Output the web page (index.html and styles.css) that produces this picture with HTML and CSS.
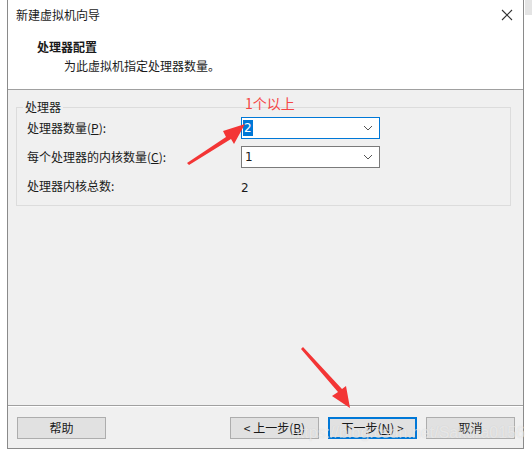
FILE: index.html
```html
<!DOCTYPE html>
<html>
<head>
<meta charset="utf-8">
<link rel="stylesheet" href="styles.css">
</head>
<body>
<div class="corner"></div>
<div class="window">
  <div class="header">
    <div class="titlebar">
      <span class="title">新建虚拟机向导</span>
      <svg class="close" width="12" height="12" viewBox="0 0 12 12"><path d="M1 1L11 11M11 1L1 11" stroke="#333" stroke-width="1.1" fill="none"/></svg>
    </div>
    <div class="heading">处理器配置</div>
    <div class="subheading">为此虚拟机指定处理器数量。</div>
  </div>
  <div class="body">
    <div class="group">
      <div class="legend">处理器</div>
      <div class="grid">
        <div class="label">处理器数量(<u>P</u>):</div>
        <div class="combo focused"><span class="sel">2</span><svg class="chev" width="10" height="6" viewBox="0 0 10 6"><path d="M1 1L5 5L9 1" stroke="#555" fill="none"/></svg></div>
        <div class="label">每个处理器的内核数量(<u>C</u>):</div>
        <div class="combo"><span class="val">1</span><svg class="chev" width="10" height="6" viewBox="0 0 10 6"><path d="M1 1L5 5L9 1" stroke="#555" fill="none"/></svg></div>
        <div class="label">处理器内核总数:</div>
        <div class="plain">2</div>
      </div>
    </div>
  </div>
  <div class="footer">
    <div class="btn">帮助</div>
    <div class="spacer"></div>
    <div class="btn">&lt; 上一步(<u>B</u>)</div>
    <div class="btn default">下一步(<u>N</u>) &gt;</div>
    <div class="btn">取消</div>
  </div>
</div>
<div class="note">1个以上</div>
<svg class="arrows" width="532" height="456" viewBox="0 0 532 456">
  <polygon points="187,163 226,137 223,131 245,124 234,144 231,139 189,165" fill="#f33535"/>
  <polygon points="301,349 338,392 332,396 350,408 346,386 342,389 303,347" fill="#f33535"/>
</svg>
<div class="watermark">https://blog.csdn.net/Sakura0156</div>
</body>
</html>
```
FILE: styles.css
```css
html, body {
  margin: 0;
  padding: 0;
  background: #ffffff;
  width: 532px;
  height: 456px;
  overflow: hidden;
  font-family: "Microsoft YaHei", "Noto Sans CJK SC", "DejaVu Sans", sans-serif;
  font-size: 12px;
  color: #1a1a1a;
}
.corner {
  position: absolute;
  left: 525px;
  top: 0;
  width: 7px;
  height: 15px;
  background: #e4e4e4;
}
.window {
  margin-left: 7px;
  width: 515px;
  height: 448px;
  border: 1px solid #8a8a8a;
  border-top: none;
  display: flex;
  flex-direction: column;
  background: #f0f0f0;
}
.header {
  background: #ffffff;
  height: 90px;
  border-bottom: 1px solid #a0a0a0;
  box-sizing: border-box;
  flex: none;
}
.titlebar {
  height: 30px;
  display: flex;
  align-items: center;
  justify-content: space-between;
  padding: 0 10px 0 8px;
  line-height: 16px;
}
.close { display: block; margin-top: 0; }
.heading {
  font-weight: bold;
  margin-left: 29px;
  margin-top: 8px;
  line-height: 18px;
}
.subheading {
  margin-left: 56px;
  margin-top: 1px;
  line-height: 18px;
}
.body {
  flex: 1;
  padding: 17px 0 0 8px;
  border-bottom: 1px solid #a0a0a0;
}
.group {
  position: relative;
  width: 495px;
  height: 99px;
  border: 1px solid #dcdcdc;
  box-sizing: border-box;
}
.legend {
  position: absolute;
  top: -9px;
  left: 6px;
  padding: 0 2px;
  background: #f0f0f0;
  line-height: 16px;
}
.grid {
  display: grid;
  grid-template-columns: 214px 139px;
  grid-template-rows: 22px 22px 22px;
  row-gap: 7px;
  padding: 9px 0 0 10px;
  align-items: center;
}
.label { line-height: 16px; }
.label u, .btn u { text-decoration: underline; }
.combo {
  height: 22px;
  box-sizing: border-box;
  border: 1px solid #7a7a7a;
  background: #fff;
  display: flex;
  align-items: center;
  justify-content: space-between;
  padding: 0 6px 0 1px;
}
.combo.focused { border-color: #0078d7; }
.sel {
  background: #0078d7;
  color: #fff;
  padding: 0 1px;
  line-height: 16px;
  font-family: "DejaVu Sans", sans-serif;
}
.val {
  padding-left: 2px;
  line-height: 16px;
  font-family: "DejaVu Sans", sans-serif;
}
.plain {
  line-height: 16px;
  font-family: "DejaVu Sans", sans-serif;
  margin-top: 4px;
}
.footer {
  height: 42px;
  flex: none;
  display: flex;
  align-items: flex-start;
  padding: 10px 0 0 9px;
  box-sizing: border-box;
  border-top: 1px solid #ffffff;
  gap: 9px;
}
.spacer { width: 106px; flex: none; }
.btn {
  width: 89px;
  flex: none;
  height: 22px;
  box-sizing: border-box;
  border: 1px solid #adadad;
  background: #e1e1e1;
  display: flex;
  align-items: center;
  justify-content: center;
  line-height: 16px;
}
.btn.default { border: 2px solid #0078d7; }
.note {
  position: absolute;
  left: 245px;
  top: 95px;
  color: #f54646;
  font-size: 14px;
  line-height: 17px;
}
.arrows {
  position: absolute;
  left: 0;
  top: 0;
}
.watermark {
  position: absolute;
  left: 291px;
  top: 423px;
  font-family: "Liberation Sans", Arial, sans-serif;
  font-size: 16px;
  color: rgba(255, 255, 255, 0.5);
  line-height: 20px;
  text-shadow: 0 0 1px rgba(150,150,150,0.3);
  white-space: nowrap;
}
```
